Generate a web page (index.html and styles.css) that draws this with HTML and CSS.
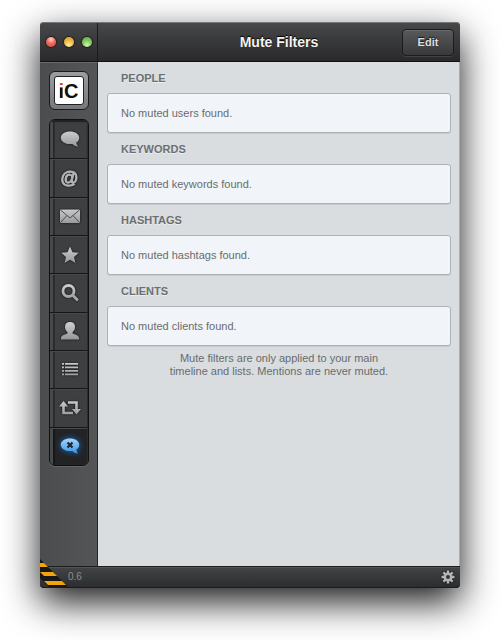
FILE: index.html
```html
<!DOCTYPE html>
<html lang="en">
<head>
<meta charset="utf-8">
<title>Mute Filters</title>
<link rel="stylesheet" href="styles.css">
</head>
<body>
<svg class="defs" aria-hidden="true">
  <defs>
    <linearGradient id="silver" gradientUnits="userSpaceOnUse" x1="0" y1="2" x2="0" y2="22">
      <stop offset="0" stop-color="#d4d5d7"/><stop offset="1" stop-color="#8e9092"/>
    </linearGradient>
    <linearGradient id="blue" x1="0" y1="0" x2="0" y2="1">
      <stop offset="0" stop-color="#a5d4fb"/><stop offset="1" stop-color="#3b93e6"/>
    </linearGradient>
  </defs>
</svg>
<div class="window">
  <header class="titlebar">
    <div class="lights">
      <button class="light red" aria-label="Close"></button>
      <button class="light yellow" aria-label="Minimize"></button>
      <button class="light green" aria-label="Zoom"></button>
    </div>
    <div class="heading">
      <h1>Mute Filters</h1>
      <button class="edit">Edit</button>
    </div>
  </header>
  <div class="body">
    <aside class="sidebar">
      <button class="avatar" aria-label="Account"><span class="logo"><span class="logo-i">i</span>C</span></button>
      <nav class="tabs">
        <button aria-label="Timeline"><svg viewBox="0 0 24 24"><path fill="url(#silver)" d="M12 4.500c5.200 0 9.200 2.600 9.200 6.200 0 2-1.100 3.700-3 4.900.2 1.500.8 2.800 1.800 3.900-2.300-.2-4.200-1.100-5.500-2.600-.8.100-1.600.2-2.500.2-5.200 0-9.200-2.800-9.200-6.400S6.800 4.500 12 4.500z"/></svg></button>
        <button aria-label="Mentions"><span class="at">@</span></button>
        <button aria-label="Messages"><svg viewBox="0 0 24 24"><rect x="2" y="5.500" width="20" height="13.500" rx="1" fill="url(#silver)"/><path d="M2.500 6l9.500 8 9.500-8M2.500 18.500l6.500-7M21.500 18.500l-6.500-7" fill="none" stroke="#4b4d4f" stroke-width="1"/></svg></button>
        <button aria-label="Favorites"><svg viewBox="0 0 24 24"><path fill="url(#silver)" d="M12 3.500l2.500 5.800 6.200.5-4.700 4.100 1.500 6L12 16.800l-5.500 3.100 1.500-6-4.700-4.100 6.200-.5z"/></svg></button>
        <button aria-label="Search"><svg viewBox="0 0 24 24"><circle cx="10.500" cy="10" r="5.500" fill="none" stroke="url(#silver)" stroke-width="2.800"/><path d="M14.500 14l4.500 4.500" stroke="#a2a4a6" stroke-width="3" stroke-linecap="round"/></svg></button>
        <button aria-label="Profile"><svg viewBox="0 0 24 24"><path fill="url(#silver)" d="M12 3c3.200 0 5 2 5 4.700 0 2.300-1 4.300-2.400 5.300v1.500c1.600.9 6.400 1.600 6.400 4.500v1.500H3V19c0-2.900 4.800-3.600 6.400-4.500V13C8 12 7 10 7 7.700 7 5 8.800 3 12 3z"/></svg></button>
        <button aria-label="Lists"><svg viewBox="0 0 24 24"><path fill="url(#silver)" d="M4 5h2v1.700H4zM7 5h13v1.700H7zM4 8.500h2v1.700H4zM7 8.500h13v1.700H7zM4 12h2v1.700H4zM7 12h13v1.700H7zM4 15.500h2v1.700H4zM7 15.500h13v1.700H7z"/></svg></button>
        <button aria-label="Retweets"><svg viewBox="0 0 24 24"><path d="M5.500 9v8H15M10 6.500h8.500V15" fill="none" stroke="url(#silver)" stroke-width="2.600"/><path fill="url(#silver)" d="M5.500 5l4.500 5.500H1zM18.500 18.500L14 13h9z"/></svg></button>
        <button class="active" aria-label="Mute Filters" aria-current="page"><svg viewBox="0 0 24 24"><path fill="url(#blue)" d="M12 4.500c5.200 0 9.200 2.600 9.200 6.200 0 2-1.100 3.700-3 4.900.2 1.500.8 2.800 1.800 3.900-2.300-.2-4.200-1.100-5.500-2.600-.8.100-1.600.2-2.500.2-5.200 0-9.200-2.800-9.200-6.400S6.800 4.500 12 4.500z"/><path d="M9.500 8.500l5 5M14.500 8.500l-5 5" stroke="#1d2630" stroke-width="2.200"/></svg></button>
      </nav>
    </aside>
    <main class="content">
      <h2>PEOPLE</h2>
      <p class="card">No muted users found.</p>
      <h2>KEYWORDS</h2>
      <p class="card">No muted keywords found.</p>
      <h2>HASHTAGS</h2>
      <p class="card">No muted hashtags found.</p>
      <h2>CLIENTS</h2>
      <p class="card">No muted clients found.</p>
      <p class="note">Mute filters are only applied to your main timeline and lists. Mentions are never muted.</p>
    </main>
  </div>
  <footer class="statusbar">
    <svg class="ribbon" viewBox="0 0 28 28" aria-hidden="true"><path fill="#171717" d="M0 0l28 28H9L0 19z"/><path fill="#f0a30a" d="M0 4h4l4 4H0zM0 13h13l4 4H4l-4-4zM4 22h18l4 4H8z"/></svg>
    <span class="version">0.6</span>
    <button class="settings" aria-label="Settings"><svg viewBox="0 0 16 16"><g stroke="#b4b5b7" stroke-width="2.400"><path d="M8 1.500v13M1.500 8h13M3.400 3.400l9.200 9.200M12.600 3.400l-9.200 9.200"/></g><circle cx="8" cy="8" r="4.500" fill="#b4b5b7"/><circle cx="8" cy="8" r="2" fill="#343537"/></svg></button>
  </footer>
</div>
</body>
</html>
```
FILE: styles.css
```css
* { box-sizing: border-box; }

body {
  margin: 0;
  min-height: 100vh;
  padding: 22px 40px 53px;
  display: flex;
  background: #fff;
  font-family: "Liberation Sans", Arial, sans-serif;
}

.defs { position: absolute; width: 0; height: 0; }

button {
  margin: 0;
  padding: 0;
  border: 0;
  background: none;
  font: inherit;
  color: inherit;
}

h1, h2, p { margin: 0; }

.window {
  flex: 1;
  display: flex;
  flex-direction: column;
  border-radius: 4px;
  background: #4f5052;
  box-shadow: 0 14px 36px rgba(0, 0, 0, .9);
}

.titlebar {
  display: flex;
  height: 40px;
  border-top: 1px solid #77787a;
  border-bottom: 1px solid #111;
  border-radius: 4px 4px 0 0;
  background: linear-gradient(#47484a, #29292b);
}

.lights {
  width: 58px;
  display: flex;
  align-items: center;
  justify-content: center;
  gap: 8px;
  border-right: 1px solid #1b1b1c;
}

.light {
  width: 10px;
  height: 10px;
  border-radius: 50%;
  box-shadow: 0 0 1px 1px #222;
}

.red { background: radial-gradient(circle at 50% 25%, #ffd0c8, #f0695c 45%, #e0463a); }
.yellow { background: radial-gradient(circle at 50% 80%, #ffeeb0, #efb93c 50%, #d99a22); }
.green { background: radial-gradient(circle at 50% 80%, #d4f5b4, #80c95c 50%, #5ea53f); }

.heading {
  flex: 1;
  display: grid;
  grid-template-columns: 1fr auto 1fr;
  align-items: center;
  padding: 0 6px;
}

h1 {
  grid-column: 2;
  font-size: 14px;
  line-height: 18px;
  color: #f4f4f4;
  text-shadow: 0 -1px 1px #000;
}

.edit {
  justify-self: end;
  width: 52px;
  height: 27px;
  border: 1px solid #1c1c1d;
  border-radius: 4px;
  background: linear-gradient(#58595b, #39393b);
  box-shadow: inset 0 1px 0 #68696b, 0 1px 0 #424244;
  font-size: 11px;
  font-weight: bold;
  color: #dedede;
  text-shadow: 0 -1px 1px #111;
}

.body { flex: 1; display: flex; }

.sidebar {
  width: 58px;
  display: flex;
  flex-direction: column;
  align-items: center;
  gap: 9px;
  padding-top: 8px;
  border-top: 1px solid #68696b;
  border-right: 1px solid #252627;
  background: linear-gradient(90deg, #4b4c4e, #545557);
}

.avatar {
  width: 40px;
  height: 39px;
  padding: 4px;
  border: 1px solid #1b1b1c;
  border-radius: 6px;
  background: linear-gradient(#9c9da1, #77787c);
}

.logo {
  display: block;
  height: 100%;
  border: 1px solid #222;
  border-radius: 3px;
  background: #fff;
  color: #111;
  font-size: 20px;
  font-weight: bold;
  line-height: 28px;
}

.logo-i {
  background: linear-gradient(#e0402e 8px, #111 8px);
  background-clip: text;
  color: transparent;
}

.tabs {
  width: 40px;
  height: 347px;
  display: grid;
  grid-auto-rows: 1fr;
  border: 1px solid #111;
  border-radius: 6px;
  overflow: hidden;
  background: #3e3f41;
  box-shadow: 0 1px 0 #646567;
}

.tabs button {
  display: flex;
  align-items: center;
  justify-content: center;
  padding-left: 3px;
  background: linear-gradient(90deg, #48494b 3px, #252627 3px, #303133 5px, transparent 5px);
  border-right: 1px solid #2c2d2e;
}

.tabs button:first-child { box-shadow: inset 0 2px 1px #222; }

.tabs button + button {
  border-top: 1px solid #161617;
  box-shadow: inset 0 1px 0 #48494b;
}

.tabs svg {
  width: 24px;
  height: 24px;
  filter: drop-shadow(0 0 1px #111);
}

.at {
  font-size: 18px;
  line-height: 24px;
  color: #b4b5b7;
  -webkit-text-stroke: 1px #b4b5b7;
  filter: drop-shadow(0 0 1px #111);
}

.tabs .active { background: linear-gradient(90deg, #48494b 3px, #161718 3px, #161718 5px, #222325 5px); }
.tabs .active svg { filter: drop-shadow(0 0 3px #1673c4); }

.content {
  flex: 1;
  padding: 0 8px 0 9px;
  border-right: 1px solid #aaadaf;
  background: #d9dde0;
  color: #6a6b6c;
}

h2 {
  padding: 1px 14px 0;
  font-size: 11px;
  line-height: 30px;
  color: #6c6f71;
  text-shadow: 0 1px 0 #eceeef;
}

.card {
  padding: 0 13px;
  border: 1px solid #aeb2b5;
  border-radius: 3px;
  background: #f1f5f9;
  box-shadow: 0 1px 0 #c6cacd;
  font-size: 11px;
  line-height: 38px;
}

.note {
  max-width: 224px;
  margin: 6px auto 0;
  font-size: 11px;
  line-height: 13px;
  text-align: center;
}

.statusbar {
  position: relative;
  display: flex;
  align-items: center;
  height: 22px;
  padding: 0 4px 0 28px;
  border-top: 1px solid #1b1b1c;
  border-bottom: 1px solid #1b1b1c;
  border-radius: 0 0 4px 4px;
  background: linear-gradient(#434446, #2c2d2f);
  box-shadow: inset 0 1px 0 #535456;
}

.ribbon {
  position: absolute;
  left: 0;
  bottom: 0;
  width: 28px;
  height: 28px;
  border-radius: 0 0 0 4px;
}

.version {
  flex: 1;
  font-size: 10px;
  line-height: 20px;
  color: #8d8e90;
}

.settings { display: flex; }
.settings svg { width: 16px; height: 16px; filter: drop-shadow(0 0 1px #111); }
```
